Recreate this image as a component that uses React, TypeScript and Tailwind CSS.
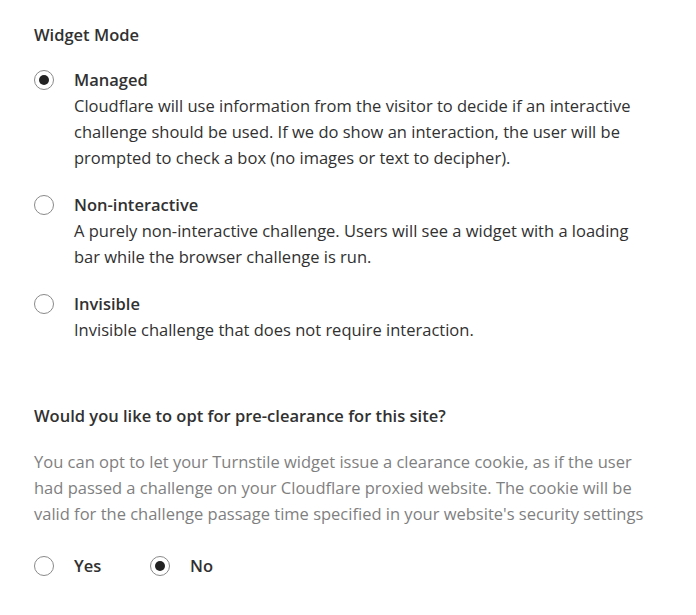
const modes = [
  {
    label: "Managed",
    desc: "Cloudflare will use information from the visitor to decide if an interactive challenge should be used. If we do show an interaction, the user will be prompted to check a box (no images or text to decipher).",
    checked: true,
  },
  {
    label: "Non-interactive",
    desc: "A purely non-interactive challenge. Users will see a widget with a loading bar while the browser challenge is run.",
    checked: false,
  },
  {
    label: "Invisible",
    desc: "Invisible challenge that does not require interaction.",
    checked: false,
  },
];

const Radio = ({ checked }: { checked: boolean }) => (
  <span className="w-5 h-5 shrink-0 rounded-full border border-[#8a8a8a] bg-white flex items-center justify-center">
    {checked && <span className="w-[10px] h-[10px] rounded-full bg-[#222]" />}
  </span>
);

export default function App() {
  return (
    <div
      className="w-[696px] h-[615px] bg-white pl-[34px] pr-[20px] pt-[22px] text-[16.5px] leading-[26px] text-[#313131]"
      style={{ fontFamily: '"Open Sans", "Noto Sans", sans-serif' }}
    >
      <h2 className="font-semibold">Widget Mode</h2>

      <div className="mt-[19px] flex flex-col gap-[21px]">
        {modes.map((m) => (
          <label key={m.label} className="flex gap-5 items-start">
            <span className="pt-[3px]">
              <Radio checked={m.checked} />
            </span>
            <span className="flex flex-col max-w-[575px]">
              <span className="font-semibold">{m.label}</span>
              <span>{m.desc}</span>
            </span>
          </label>
        ))}
      </div>

      <h2 className="font-semibold mt-[60px]">Would you like to opt for pre-clearance for this site?</h2>
      <p className="mt-[20px] text-[#7f7f7f] max-w-[625px]">
        You can opt to let your Turnstile widget issue a clearance cookie, as if the user had passed a challenge on
        your Cloudflare proxied website. The cookie will be valid for the challenge passage time specified in your
        website's security settings
      </p>

      <div className="mt-[26px] flex items-center">
        <label className="flex items-center gap-5 w-[116px]">
          <Radio checked={false} />
          <span className="font-semibold">Yes</span>
        </label>
        <label className="flex items-center gap-5">
          <Radio checked={true} />
          <span className="font-semibold">No</span>
        </label>
      </div>
    </div>
  );
}
